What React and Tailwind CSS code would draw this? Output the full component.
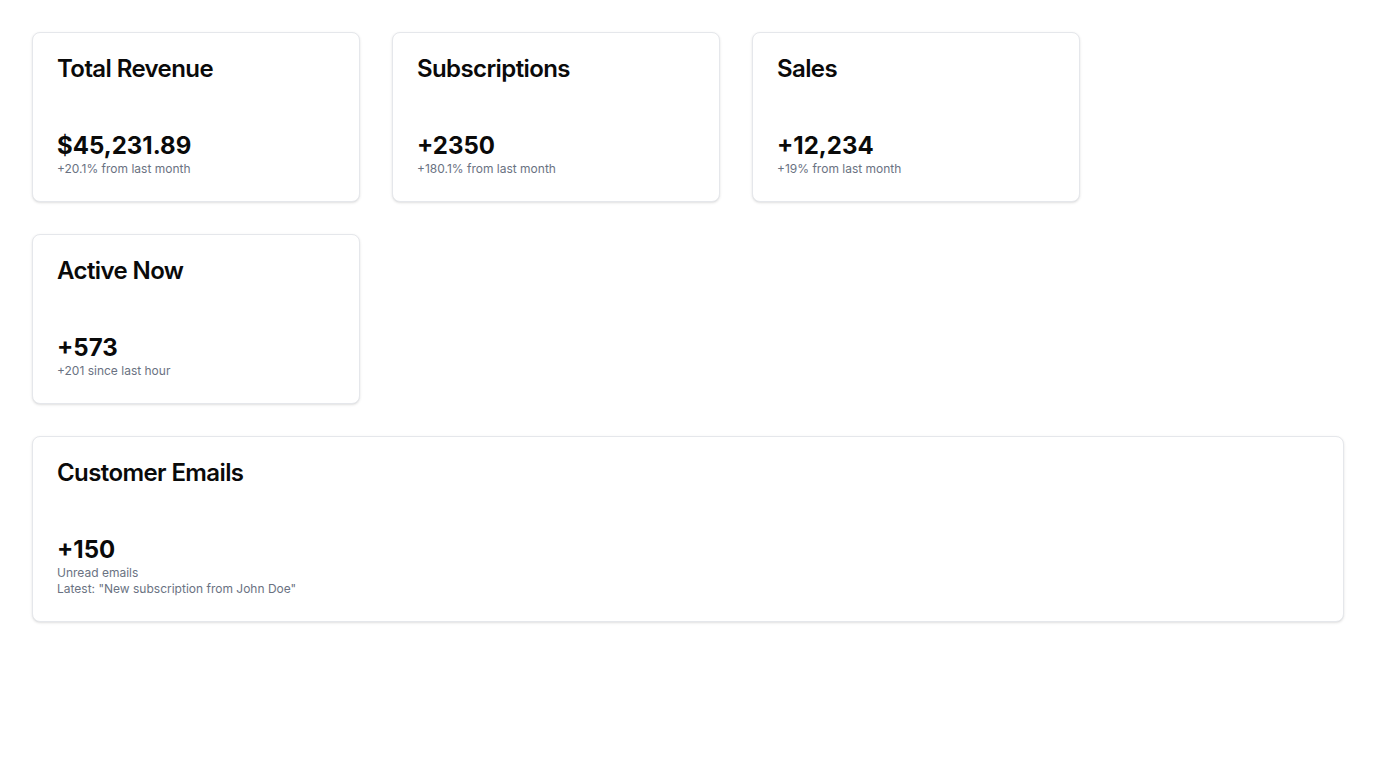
import React from "react";

const cards = [
  { title: "Total Revenue", value: "$45,231.89", lines: ["+20.1% from last month"] },
  { title: "Subscriptions", value: "+2350", lines: ["+180.1% from last month"] },
  { title: "Sales", value: "+12,234", lines: ["+19% from last month"] },
  { title: "Active Now", value: "+573", lines: ["+201 since last hour"] },
];

function Card({ title, value, lines, className = "" }) {
  return (
    <div className={"rounded-lg border border-gray-200 bg-white shadow-sm p-6 " + className}>
      <h3 className="text-2xl leading-none font-semibold tracking-tight text-[#0a0a0a]">{title}</h3>
      <div className="mt-[49px] text-2xl leading-[31px] font-bold text-[#0a0a0a]">{value}</div>
      {lines.map((l, i) => (
        <p key={i} className="text-xs leading-4 text-gray-500">{l}</p>
      ))}
    </div>
  );
}

export default function App() {
  return (
    <div className="min-h-screen bg-white p-8" style={{ fontFamily: "Inter, 'Noto Sans', sans-serif" }}>
      <div className="flex flex-wrap gap-8">
        {cards.map((c) => (
          <Card key={c.title} {...c} className="w-[328px]" />
        ))}
        <Card
          title="Customer Emails"
          value="+150"
          lines={["Unread emails", 'Latest: "New subscription from John Doe"']}
          className="w-full"
        />
      </div>
    </div>
  );
}
